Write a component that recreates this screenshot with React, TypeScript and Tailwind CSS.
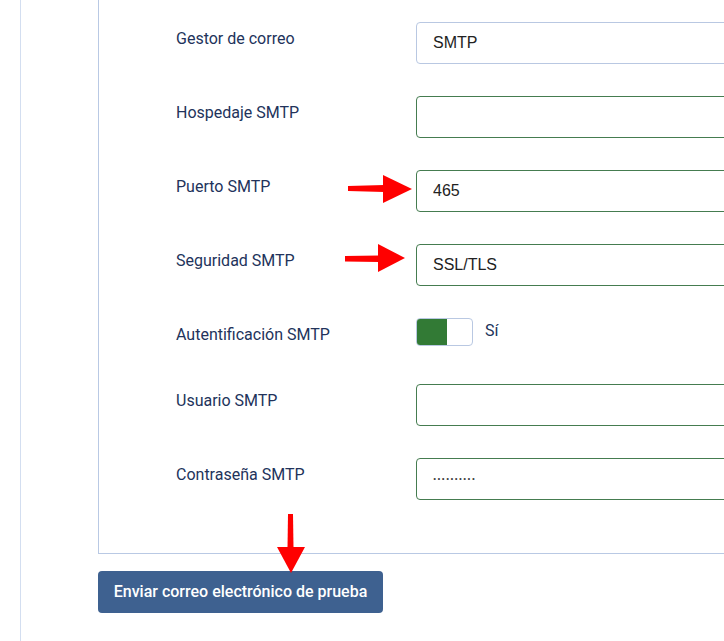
import React from "react";

type Field = {
  label: string;
  value?: string;
  kind?: "text" | "toggle" | "password";
  plain?: boolean;
};

const fields: Field[] = [
  { label: "Gestor de correo", value: "SMTP", plain: true },
  { label: "Hospedaje SMTP", value: "" },
  { label: "Puerto SMTP", value: "465" },
  { label: "Seguridad SMTP", value: "SSL/TLS" },
  { label: "Autentificación SMTP", kind: "toggle" },
  { label: "Usuario SMTP", value: "" },
  { label: "Contraseña SMTP", kind: "password" },
];

function Control({ field }: { field: Field }) {
  if (field.kind === "toggle") {
    return (
      <div className="flex items-center">
        <div className="flex h-[28px] w-[57px] overflow-hidden rounded-[4px] border border-[#b9c8e2] bg-white">
          <div className="h-full w-[30px] bg-[#327a35]" />
        </div>
        <span className="ml-[12px] -mt-[2px] text-[16px] text-[#22335b]">Sí</span>
      </div>
    );
  }

  if (field.kind === "password") {
    return (
      <div className="flex h-[42px] w-[400px] items-center rounded-[4px] border border-[#457c50] bg-white px-4">
        <span className="text-[12px] leading-none tracking-[0.3px] font-bold text-[#444] font-['Liberation_Sans',Arial,sans-serif]">
          ··········
        </span>
      </div>
    );
  }

  return (
    <input
      readOnly
      defaultValue={field.value}
      className={`block h-[42px] w-[400px] rounded-[4px] border bg-white px-4 text-[16px] text-[#222] outline-none font-['Liberation_Sans',Arial,sans-serif] ${
        field.plain ? "border-[#b9c8e2]" : "border-[#457c50]"
      }`}
    />
  );
}

export default function App() {
  return (
    <div className="relative h-[641px] w-[724px] overflow-hidden bg-white font-[Roboto,sans-serif]">
      <div className="ml-[20px] h-full border-l border-[#d3def0] pl-[77px]">
        {/* fieldset, top and right edges are out of frame */}
        <div className="w-[700px] border-b border-l border-[#b9c9e4] pt-[22px] pb-[53px] pl-[77px]">
          {fields.map((f) => (
            <div
              key={f.label}
              className={`flex ${f.kind === "toggle" ? "mb-[38px]" : "mb-[32px]"} last:mb-0`}
            >
              <div className="w-[240px] shrink-0 pt-[6px] text-[16px] leading-[22px] text-[#22335b]">
                {f.label}
              </div>
              <Control field={f} />
            </div>
          ))}
        </div>

        <button className="mt-[17px] h-[42px] w-[285px] rounded-[4px] bg-[#3e6190] text-[16px] font-medium text-white">
          Enviar correo electrónico de prueba
        </button>
      </div>

      {/* red annotation arrows */}
      <svg className="pointer-events-none absolute inset-0" width="724" height="641">
        <polygon points="348,186 384,185 384,192 348,191" fill="#ff0000" />
        <polygon points="383,175 412,189 383,203" fill="#ff0000" />
        <polygon points="345,256 379,255.5 379,262 345,261.5" fill="#ff0000" />
        <polygon points="378,244 405,258 378,272" fill="#ff0000" />
        <polygon points="288,514 293,514 293.5,548 287.5,548" fill="#ff0000" />
        <polygon points="277,547 305,547 291,573" fill="#ff0000" />
      </svg>
    </div>
  );
}
